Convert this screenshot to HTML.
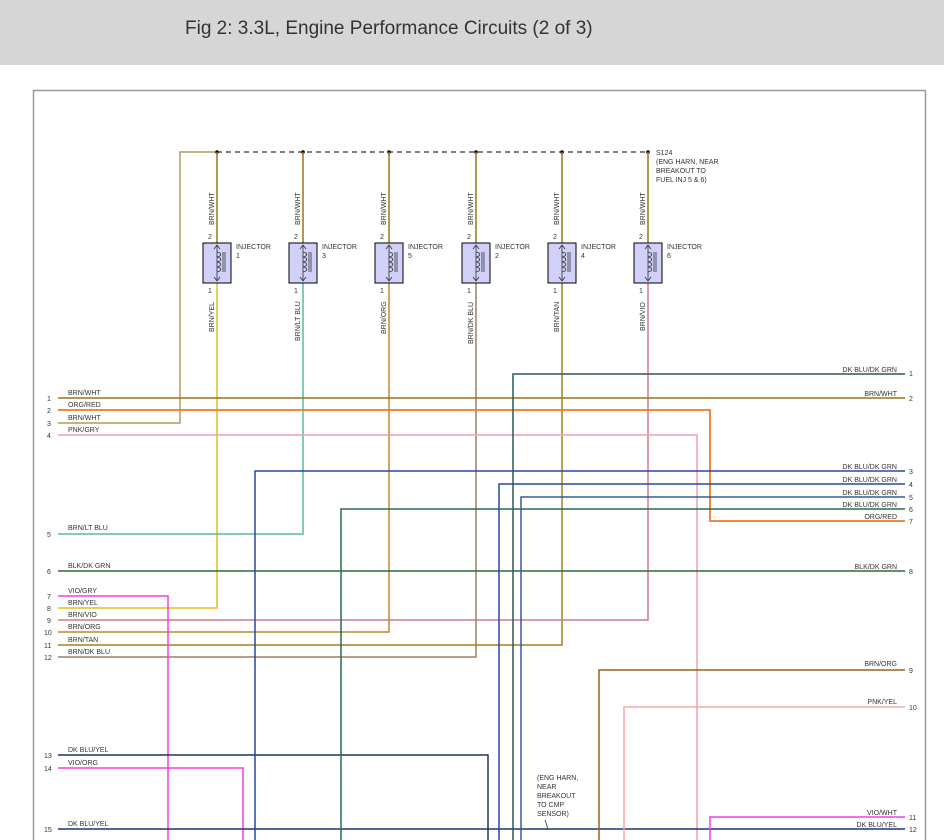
<!DOCTYPE html>
<html><head><meta charset="utf-8"><style>
html,body{margin:0;padding:0;background:#fff;width:944px;height:840px;overflow:hidden}
.hd{position:absolute;left:0;top:0;width:944px;height:65px;background:#d6d6d6}
.hd span{position:absolute;left:185px;top:18px;font:19px "Liberation Sans",sans-serif;color:#333}
svg{position:absolute;left:0;top:0}
text{font-family:"Liberation Sans",sans-serif;font-size:7px;fill:#333}
.n{fill:#a0522d}
</style></head><body>
<div class="hd"><span>Fig 2: 3.3L, Engine Performance Circuits (2 of 3)</span></div>
<svg width="944" height="840" viewBox="0 0 944 840" fill="none">
<rect x="33.5" y="90.5" width="892" height="760" stroke="#999" stroke-width="1.5"/>
<!-- dashed splice -->
<line x1="217" y1="152" x2="648" y2="152" stroke="#000" stroke-dasharray="5,4"/>
<g fill="#000"><circle cx="217" cy="152" r="1.8"/><circle cx="303" cy="152" r="1.8"/><circle cx="389" cy="152" r="1.8"/><circle cx="476" cy="152" r="1.8"/><circle cx="562" cy="152" r="1.8"/><circle cx="648" cy="152" r="1.8"/></g>
<text x="656" y="155">S124</text><text x="656" y="164">(ENG HARN, NEAR</text><text x="656" y="173">BREAKOUT TO</text><text x="656" y="182">FUEL INJ 5 &amp; 6)</text>
<polyline points="215,152 180,152 180,423 58,423" stroke="#b09a5a" stroke-width="1.5"/>
<!-- top wires -->
<g stroke="#9a7418" stroke-width="1.5">
<line x1="217" y1="152" x2="217" y2="243"/><line x1="303" y1="152" x2="303" y2="243"/><line x1="389" y1="152" x2="389" y2="243"/><line x1="476" y1="152" x2="476" y2="243"/><line x1="562" y1="152" x2="562" y2="243"/><line x1="648" y1="152" x2="648" y2="243"/>
</g>
<!-- bottom injector wires -->
<polyline points="217,283 217,608 58,608" stroke="#d8c020" stroke-width="1.5"/>
<polyline points="303,283 303,534 58,534" stroke="#5ab8a0" stroke-width="1.5"/>
<polyline points="389,283 389,632 58,632" stroke="#c08830" stroke-width="1.5"/>
<polyline points="476,283 476,657 58,657" stroke="#9a8060" stroke-width="1.5"/>
<polyline points="562,283 562,645 58,645" stroke="#a08020" stroke-width="1.5"/>
<polyline points="648,283 648,620 58,620" stroke="#d07888" stroke-width="1.5"/>
<!-- injectors -->
<g id="inj">
<rect x="203" y="243" width="28" height="40" fill="#d0d0f8" stroke="#000"/>
<path d="M217 245v36M214 249l3-4 3 4M214 277l3 4 3-4M217 252c5 1 5 4 0 5c5 1 5 4 0 5c5 1 5 4 0 5c5 1 5 4 0 5M223 252v20M225 252v20" stroke="#333" stroke-width="0.8"/>
</g>
<use href="#inj" x="86"/><use href="#inj" x="172"/><use href="#inj" x="259"/><use href="#inj" x="345"/><use href="#inj" x="431"/>
<g class="n">
<text x="236" y="249">INJECTOR</text><text x="236" y="258">1</text>
<text x="322" y="249">INJECTOR</text><text x="322" y="258">3</text>
<text x="408" y="249">INJECTOR</text><text x="408" y="258">5</text>
<text x="495" y="249">INJECTOR</text><text x="495" y="258">2</text>
<text x="581" y="249">INJECTOR</text><text x="581" y="258">4</text>
<text x="667" y="249">INJECTOR</text><text x="667" y="258">6</text>
</g>
<g>
<text x="208" y="239">2</text><text x="294" y="239">2</text><text x="380" y="239">2</text><text x="467" y="239">2</text><text x="553" y="239">2</text><text x="639" y="239">2</text>
<text x="208" y="293">1</text><text x="294" y="293">1</text><text x="380" y="293">1</text><text x="467" y="293">1</text><text x="553" y="293">1</text><text x="639" y="293">1</text>
</g>
<g>
<text transform="translate(214,225) rotate(-90)">BRN/WHT</text>
<text transform="translate(300,225) rotate(-90)">BRN/WHT</text>
<text transform="translate(386,225) rotate(-90)">BRN/WHT</text>
<text transform="translate(473,225) rotate(-90)">BRN/WHT</text>
<text transform="translate(559,225) rotate(-90)">BRN/WHT</text>
<text transform="translate(645,225) rotate(-90)">BRN/WHT</text>
<text transform="translate(214,332) rotate(-90)">BRN/YEL</text>
<text transform="translate(300,341) rotate(-90)">BRN/LT BLU</text>
<text transform="translate(386,334) rotate(-90)">BRN/ORG</text>
<text transform="translate(473,344) rotate(-90)">BRN/DK BLU</text>
<text transform="translate(559,332) rotate(-90)">BRN/TAN</text>
<text transform="translate(645,331) rotate(-90)">BRN/VIO</text>
</g>
<!-- left horizontal wires -->
<line x1="58" y1="398" x2="905" y2="398" stroke="#9a7418" stroke-width="1.5"/>
<polyline points="58,410 710,410 710,521 905,521" stroke="#f07828" stroke-width="1.8"/>
<polyline points="58,435 697,435 697,840" stroke="#f0a0b0" stroke-width="1.5"/>
<line x1="58" y1="571" x2="905" y2="571" stroke="#306838" stroke-width="1.5"/>
<polyline points="58,596 168,596 168,840" stroke="#f040e0" stroke-width="1.5"/>
<polyline points="58,755 488,755 488,840" stroke="#203060" stroke-width="1.5"/>
<polyline points="58,768 243,768 243,840" stroke="#f040e0" stroke-width="1.5"/>
<line x1="58" y1="829" x2="905" y2="829" stroke="#203080" stroke-width="1.5"/>
<!-- right wires -->
<polyline points="513,840 513,374 905,374" stroke="#2a5a5a" stroke-width="1.5"/>
<polyline points="255,840 255,471 905,471" stroke="#2848a0" stroke-width="1.5"/>
<polyline points="499,840 499,484 905,484" stroke="#2848a0" stroke-width="1.5"/>
<polyline points="521,840 521,497 905,497" stroke="#3858a0" stroke-width="1.5"/>
<polyline points="341,840 341,509 905,509" stroke="#2a6a5a" stroke-width="1.5"/>
<polyline points="599,840 599,670 905,670" stroke="#9a6018" stroke-width="1.5"/>
<polyline points="624,840 624,707 905,707" stroke="#f8a8a8" stroke-width="1.5"/>
<polyline points="710,840 710,817 905,817" stroke="#f040e0" stroke-width="1.5"/>
<line x1="545" y1="820" x2="548" y2="829" stroke="#333" stroke-width="0.8"/>
<text x="537" y="780">(ENG HARN,</text><text x="537" y="789">NEAR</text><text x="537" y="798">BREAKOUT</text><text x="537" y="807">TO CMP</text><text x="537" y="816">SENSOR)</text>
<!-- left labels -->
<g>
<text x="47" y="401">1</text><text x="68" y="395">BRN/WHT</text>
<text x="47" y="413">2</text><text x="68" y="407">ORG/RED</text>
<text x="47" y="426">3</text><text x="68" y="420">BRN/WHT</text>
<text x="47" y="438">4</text><text x="68" y="432">PNK/GRY</text>
<text x="47" y="537">5</text><text x="68" y="530">BRN/LT BLU</text>
<text x="47" y="574">6</text><text x="68" y="568">BLK/DK GRN</text>
<text x="47" y="599">7</text><text x="68" y="593">VIO/GRY</text>
<text x="47" y="611">8</text><text x="68" y="605">BRN/YEL</text>
<text x="47" y="623">9</text><text x="68" y="617">BRN/VIO</text>
<text x="44" y="635">10</text><text x="68" y="629">BRN/ORG</text>
<text x="44" y="648">11</text><text x="68" y="642">BRN/TAN</text>
<text x="44" y="660">12</text><text x="68" y="654">BRN/DK BLU</text>
<text x="44" y="758">13</text><text x="68" y="752">DK BLU/YEL</text>
<text x="44" y="771">14</text><text x="68" y="765">VIO/ORG</text>
<text x="44" y="832">15</text><text x="68" y="826">DK BLU/YEL</text>
</g>
<g text-anchor="end">
<text x="897" y="372">DK BLU/DK GRN</text>
<text x="897" y="396">BRN/WHT</text>
<text x="897" y="469">DK BLU/DK GRN</text>
<text x="897" y="482">DK BLU/DK GRN</text>
<text x="897" y="495">DK BLU/DK GRN</text>
<text x="897" y="507">DK BLU/DK GRN</text>
<text x="897" y="519">ORG/RED</text>
<text x="897" y="569">BLK/DK GRN</text>
<text x="897" y="666">BRN/ORG</text>
<text x="897" y="704">PNK/YEL</text>
<text x="897" y="815">VIO/WHT</text>
<text x="897" y="827">DK BLU/YEL</text>
</g>
<g>
<text x="909" y="376">1</text><text x="909" y="401">2</text><text x="909" y="474">3</text><text x="909" y="487">4</text><text x="909" y="500">5</text><text x="909" y="512">6</text><text x="909" y="524">7</text><text x="909" y="574">8</text><text x="909" y="673">9</text><text x="909" y="710">10</text><text x="909" y="820">11</text><text x="909" y="832">12</text>
</g>
</svg>
</body></html>
